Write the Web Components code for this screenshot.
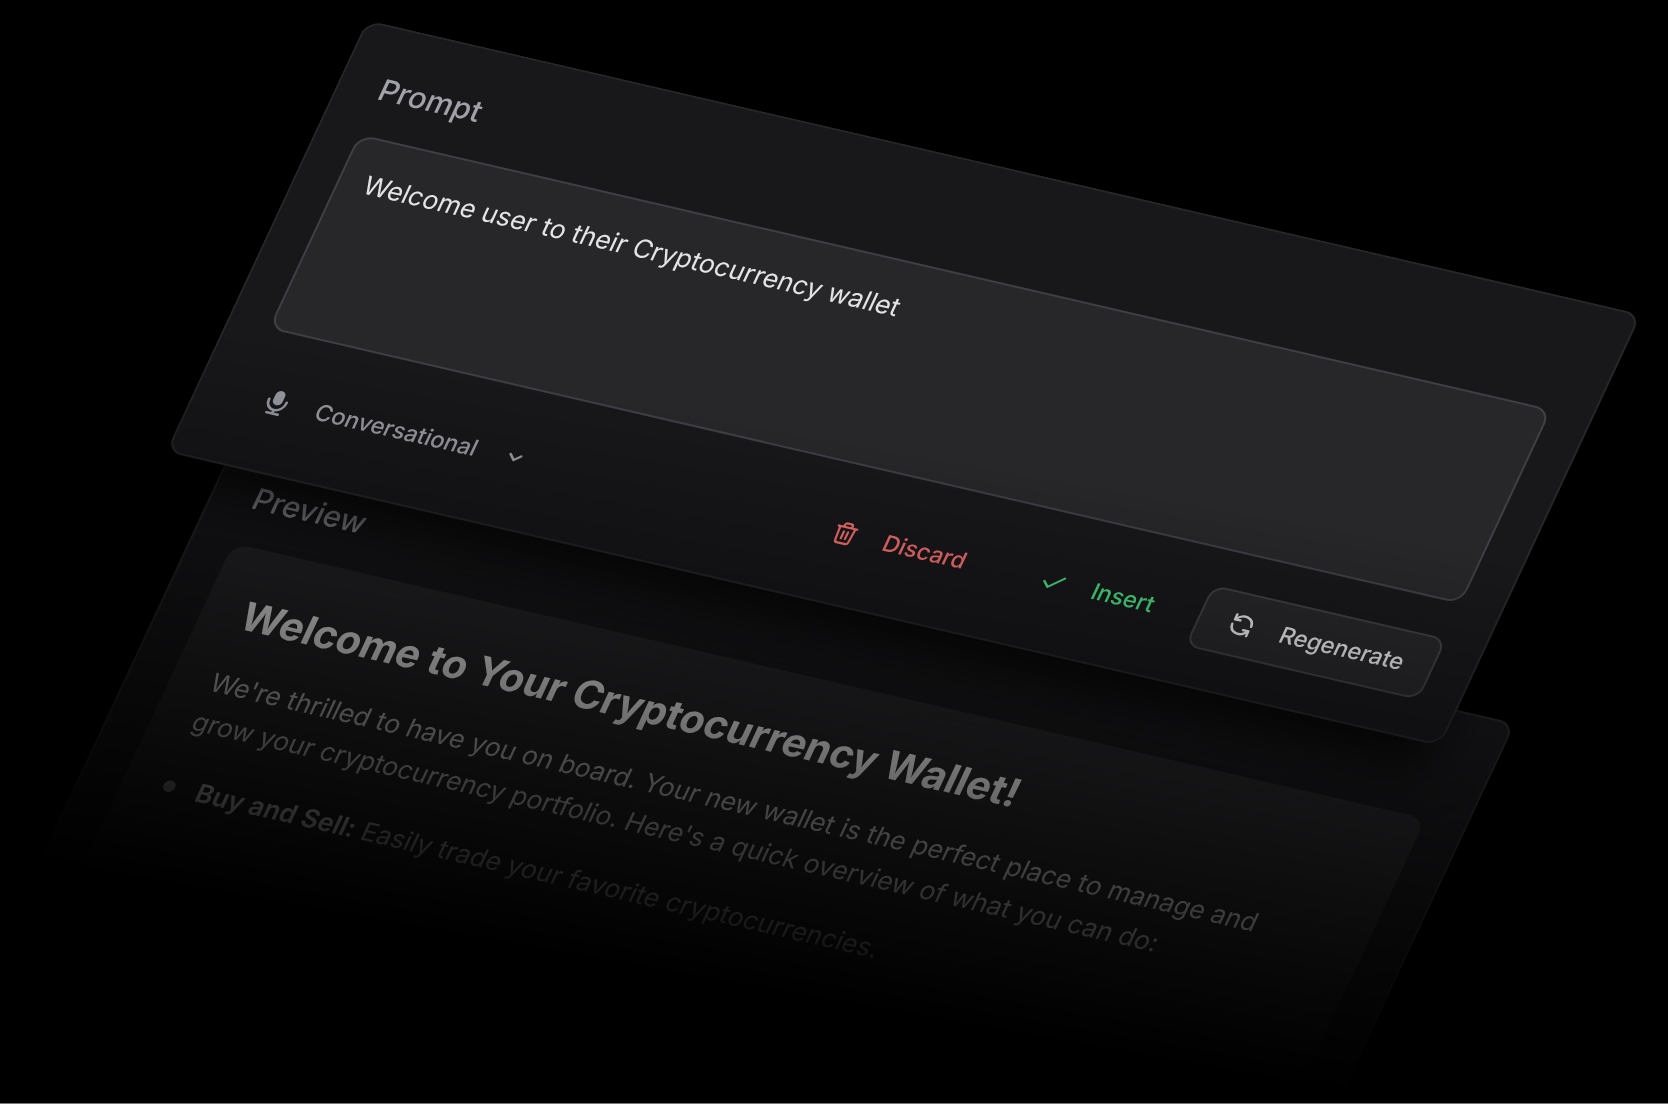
<!DOCTYPE html>
<html lang="en">
<head>
<meta charset="utf-8">
<title>Prompt</title>
<style>
  html, body { height: 100%; margin: 0; background: #000; }
  body { box-sizing: border-box; overflow: hidden; border-bottom: 1px solid #77777a; font-family: Inter, "Liberation Sans", sans-serif; }
</style>
</head>
<body>
<tilted-scene>
  <panel-card slot="front">
    <prompt-field label="Prompt" value="Welcome user to their Cryptocurrency wallet"></prompt-field>
    <tool-bar>
      <tone-select></tone-select>
      <tool-button slot="actions" tone="danger" icon="trash">Discard</tool-button>
      <tool-button slot="actions" tone="success" icon="check">Insert</tool-button>
      <tool-button slot="actions" tone="solid" icon="refresh">Regenerate</tool-button>
    </tool-bar>
  </panel-card>
  <panel-card slot="back">
    <preview-card></preview-card>
  </panel-card>
</tilted-scene>

<script>
const ICONS = {
  mic: '<rect x="5.2" y="1" width="5.6" height="8.6" rx="2.8" fill="currentColor" stroke="none"/><path d="M2.9 6.9v.6a5.1 5.1 0 0 0 10.2 0v-.6M8 12.6v2M4.7 14.7h6.6" stroke-width="1.5"/>',
  chevron: '<path d="M4.9 6.6 8 9.6l3.1-3" stroke-width="1.4"/>',
  trash: '<path d="M2.6 4.2h10.8M3.6 4.4l.6 8.2a1.3 1.3 0 0 0 1.3 1.2h5a1.3 1.3 0 0 0 1.3-1.2l.6-8.2M5.7 4V3.3A1.4 1.4 0 0 1 7.1 1.9h1.8a1.4 1.4 0 0 1 1.4 1.4V4M6.8 6.9v4.1M9.2 6.9v4.1" stroke-width="1.3"/>',
  check: '<path d="m2.8 8.6 3.2 3 7.2-6.9" stroke-width="1.3"/>',
  refresh: '<path d="M13.4 7.7A5.4 5.4 0 0 0 3.5 5.2M2.6 8.3A5.4 5.4 0 0 0 12.5 10.8M3 2.5v3h3.1M13 13.5v-3H9.9" stroke-width="1.4"/>'
};
const icon = name => `<svg viewBox="0 0 16 16" width="28" height="28" fill="none" stroke="currentColor" stroke-linecap="round" stroke-linejoin="round" aria-hidden="true">${ICONS[name]}</svg>`;
const BASE = '*, *::before { box-sizing: border-box; } svg { display: block; flex: none; }';

function define(name, render) {
  customElements.define(name, class extends HTMLElement {
    constructor() {
      super();
      this.attachShadow({ mode: 'open' }).innerHTML = `<style>${BASE}</style>` + render(this);
    }
  });
}

/* The plane on which both panels lie; it fades out towards its lower end. */
define('tilted-scene', () => `
  <style>
    :host { display: block; height: 100%; overflow: hidden; }
    .plane {
      display: flex; flex-direction: column;
      width: calc(100% - 300px);
      transform: translate(367px, 20px) rotate(13deg) skewX(-12deg);
      transform-origin: 0 0;
      mask-image: linear-gradient(177deg, #000 330px, transparent 900px);
    }
    ::slotted([slot=front]) { margin-right: 60px; position: relative; z-index: 1; }
    ::slotted([slot=back]) { margin-left: 60px; margin-top: -39px; }
  </style>
  <div class="plane"><slot name="front"></slot><slot name="back"></slot></div>`);

define('panel-card', () => `
  <style>
    :host {
      display: block; box-sizing: border-box; padding: 42px 40px 38px;
      background: #18181b; border: 2px solid #27272a; border-radius: 16px;
      box-shadow: 0 36px 48px -10px rgb(0 0 0 / .7);
    }
  </style><slot></slot>`);

define('prompt-field', el => `
  <style>
    :host { display: flex; flex-direction: column; gap: 29px; }
    label { font-size: 30px; line-height: 40px; font-weight: 500; color: #a1a1aa; }
    textarea {
      display: block; width: 100%; height: 210px; margin: 0; padding: 25px; resize: none; outline: none;
      background: #27272a; color: #e4e4e7; border: 2px solid #3f3f46; border-radius: 16px;
      font: 400 26px/42px Inter, "Liberation Sans", sans-serif;
    }
  </style>
  <label for="prompt">${el.getAttribute('label')}</label>
  <textarea id="prompt">${el.getAttribute('value')}</textarea>`);

define('tool-bar', () => `
  <style>
    :host { display: flex; justify-content: space-between; align-items: center; padding-top: 37px; margin-right: -2px; }
    .actions { display: flex; gap: 16px; }
  </style><slot></slot><div class="actions"><slot name="actions"></slot></div>`);

define('tone-select', () => `
  <style>
    :host { display: flex; align-items: center; gap: 26px; padding-left: 26px; color: #a1a1aa; }
    label, .pick { display: flex; align-items: center; }
    .pick { gap: 24px; }
    select {
      appearance: none; margin: 0; padding: 0; border: 0; outline: none; background: none; color: inherit;
      font: 500 23px/36px Inter, "Liberation Sans", sans-serif;
    }
  </style>
  <label for="tone" aria-label="Tone">${icon('mic')}</label>
  <div class="pick"><select id="tone"><option>Conversational</option></select>${icon('chevron')}</div>`);

define('tool-button', el => `
  <style>
    :host { display: block; }
    button {
      display: flex; align-items: center; gap: 26px; height: 66px; margin: 0; padding: 0 28px;
      background: none; border: 2px solid transparent; border-radius: 14px;
      font: 500 23px/36px Inter, "Liberation Sans", sans-serif; color: #e4e4e7;
    }
    :host([tone=danger]) button { color: #f87171; }
    :host([tone=success]) button { color: #4ade80; }
    :host([tone=solid]) button { background: #27272a; border-color: #3f3f46; }
  </style>
  <button type="button">${icon(el.getAttribute('icon'))}<slot></slot></button>`);

define('preview-card', () => `
  <style>
    :host { display: flex; flex-direction: column; gap: 29px; }
    h2 { margin: 0; font-size: 30px; line-height: 40px; font-weight: 500; color: #a1a1aa; }
    article { min-height: 440px; padding: 44px 40px; background: #27272a; border-radius: 16px; color: #d4d4d8; font-size: 26px; line-height: 42px; }
    h1 { margin: 0 0 27px; font-size: 40px; line-height: 48px; font-weight: 700; color: #fff; }
    p { margin: 0 0 27px; max-width: 1100px; }
    ul { margin: 0; padding: 0; list-style: none; }
    li { display: flex; align-items: center; gap: 22px; }
    li::before { content: ""; flex: none; width: 12px; height: 12px; border-radius: 50%; background: #a1a1aa; }
    strong { font-weight: 600; color: #fff; }
  </style>
  <h2>Preview</h2>
  <article>
    <h1>Welcome to Your Cryptocurrency Wallet!</h1>
    <p>We're thrilled to have you on board. Your new wallet is the perfect place to manage and grow your cryptocurrency portfolio. Here's a quick overview of what you can do:</p>
    <ul><li><span><strong>Buy and Sell:</strong> Easily trade your favorite cryptocurrencies.</span></li></ul>
  </article>`);
</script>
</body>
</html>
